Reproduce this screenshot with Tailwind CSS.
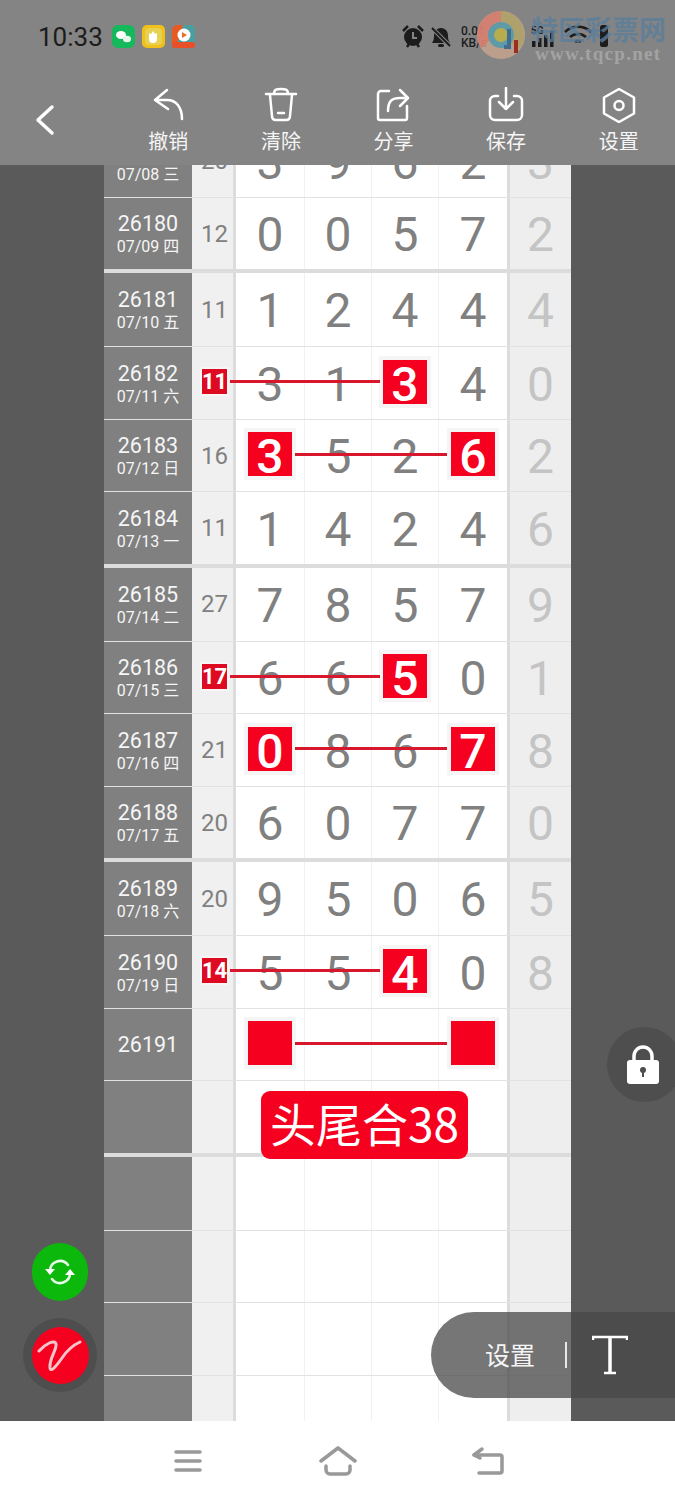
<!doctype html>
<html lang="zh">
  <head>
    <title>头尾合</title>
    <meta charset="utf-8" />
    <script src="https://cdn.jsdelivr.net/npm/@tailwindcss/browser@4"></script>
  </head>
  <body class="bg-white overflow-hidden font-['Roboto','Noto_Sans_CJK_SC',sans-serif]">
    <div class="relative w-[675px] h-[1500px] flex flex-col overflow-hidden">
      <!-- status bar + toolbar -->
      <div class="relative z-20 h-[165px] shrink-0 bg-[#848484]">
        <div class="relative h-[78px]">
          <div class="absolute left-[38px] top-[21px] text-[26px] leading-[32px] text-[#1c1c1c]">10:33</div>
          <div class="absolute left-[112px] top-[25px] flex gap-[7px]">
            <svg width="23" height="23" viewBox="0 0 23 23"><rect width="23" height="23" rx="6" fill="#16b85c"/><ellipse cx="9" cy="10" rx="5" ry="4" fill="#fff"/><ellipse cx="15" cy="14" rx="4" ry="3.2" fill="#e8f5ec"/></svg>
            <svg width="23" height="23" viewBox="0 0 23 23"><rect width="23" height="23" rx="5" fill="#f0c01c"/><rect x="3" y="3" width="17" height="17" rx="4" fill="#e8d050"/><path d="M7 8l2 1 2-3 2 3 2-1v6a4 4 0 0 1-8 0z" fill="#fff"/></svg>
            <svg width="23" height="23" viewBox="0 0 23 23"><rect width="23" height="23" rx="5" fill="#4aa0a0"/><path d="M0 5a5 5 0 0 1 5-5h6L4 23H5a5 5 0 0 1-5-5z" fill="#e85a24"/><rect y="17" width="23" height="6" rx="2" fill="#e8502a"/><circle cx="12" cy="10" r="6.5" fill="#fff"/><path d="M10 7l5 3-5 3z" fill="#e8702a"/></svg>
          </div>
          <svg class="absolute left-[401px] top-[24px]" width="52" height="25" viewBox="0 0 52 25" fill="#1c1c1c">
            <circle cx="12" cy="13" r="9"/><path d="M2 7l5-5M22 7l-5-5M6 23l2-3M18 23l-2-3" stroke="#1c1c1c" stroke-width="2.5"/><path d="M12 8v6h4" stroke="#848484" stroke-width="2" fill="none"/>
            <path d="M31 19c2-3 2-5 2-8a7 7 0 0 1 14 0c0 3 0 5 2 8z"/><rect x="37" y="20" width="6" height="3" rx="1.5"/><path d="M30 3l20 20" stroke="#848484" stroke-width="4"/><path d="M31 4l18 18" stroke="#1c1c1c" stroke-width="2"/>
          </svg>
          <div class="absolute left-[461px] top-[25px] text-[12px] leading-[12px] font-medium text-[#1c1c1c]">0.01<br />KB/s</div>
          <div class="absolute left-[531px] top-[25px] text-[10px] leading-[12px] font-bold text-[#1c1c1c]">5G</div>
          <svg class="absolute left-[503px] top-[22px]" width="106" height="28" viewBox="0 0 106 28" fill="#1c1c1c">
            <rect x="29" y="19" width="3.5" height="6"/><rect x="35" y="16" width="3.5" height="9"/><rect x="41" y="13" width="3.5" height="12"/><rect x="47" y="9" width="3.5" height="16"/>
            <path d="M62 10a19 19 0 0 1 26 0M67 15a12 12 0 0 1 16 0M72 20a5 5 0 0 1 6 0" fill="none" stroke="#1c1c1c" stroke-width="2.5"/>
            <rect x="97" y="3" width="8" height="22" rx="2.5"/>
          </svg>
          <svg class="absolute left-[476px] top-[9px]" width="50" height="52" viewBox="0 0 50 52">
            <circle cx="25" cy="26" r="24" fill="#c9a58e" fill-opacity=".8"/>
            <path d="M25 2a24 24 0 0 0-20 37l9-8A13 13 0 0 1 25 13z" fill="#d9756a" fill-opacity=".75"/>
            <path d="M25 13a13 13 0 0 1 10 21l9 5A24 24 0 0 0 25 2z" fill="#a9a35c" fill-opacity=".7"/>
            <circle cx="25" cy="26" r="13" fill="#5f9aa8"/>
            <circle cx="25" cy="26" r="7" fill="#b7ad4e"/>
            <path d="M33 20v18h-5" fill="none" stroke="#3d6f90" stroke-width="4"/>
            <rect x="38" y="31" width="4" height="13" fill="#9a2e22"/>
          </svg>
          <div class="absolute left-[531px] top-[12px] text-[27px] leading-[34px] font-bold text-[#5b7e9c]/80 font-['Noto_Sans_CJK_SC',sans-serif]">特区彩票网</div>
          <div class="absolute left-[535px] top-[43px] text-[19px] leading-[22px] tracking-[1.3px] font-bold text-[#a3a3a3] font-['Liberation_Serif',serif]">www.tqcp.net</div>
        </div>
        <div class="relative flex pl-[112px] pt-[9px]">
          <svg class="absolute left-[34px] top-[26px]" width="22" height="32" viewBox="0 0 22 32" fill="none" stroke="#fff" stroke-width="3.5" stroke-linecap="round" stroke-linejoin="round"><path d="M18 3L4 16l14 13"/></svg>
          <div class="w-[112.7px] flex flex-col items-center">
            <svg width="36" height="36" viewBox="0 0 36 36" fill="none" stroke="#fff" stroke-width="2.5" stroke-linecap="round" stroke-linejoin="round"><path d="M17 3L5 13l13 9M5 13h12c9 0 15 7 15 19"/></svg>
            <div class="mt-[5px] text-[20px] leading-[26px] text-[#f5f5f5] font-['Noto_Sans_CJK_SC',sans-serif]">撤销</div>
          </div>
          <div class="w-[112.7px] flex flex-col items-center">
            <svg width="36" height="36" viewBox="0 0 36 36" fill="none" stroke="#fff" stroke-width="2.5" stroke-linecap="round" stroke-linejoin="round"><path d="M3 7h30M11 7c0-5 3-5 7-5s7 0 7 5M7 8l2 21c0 3 2 4 4 4h10c2 0 4-1 4-4l2-21M15 26h6"/></svg>
            <div class="mt-[5px] text-[20px] leading-[26px] text-[#f5f5f5] font-['Noto_Sans_CJK_SC',sans-serif]">清除</div>
          </div>
          <div class="w-[112.7px] flex flex-col items-center">
            <svg width="36" height="36" viewBox="0 0 36 36" fill="none" stroke="#fff" stroke-width="2.5" stroke-linecap="round" stroke-linejoin="round"><path d="M14 4H6a3 3 0 0 0-3 3v24a2 2 0 0 0 2 2h25a2 2 0 0 0 2-2v-12"/><path d="M13 24c0-10 4-13 12-13h6M25 3l8 8-8 8"/></svg>
            <div class="mt-[5px] text-[20px] leading-[26px] text-[#f5f5f5] font-['Noto_Sans_CJK_SC',sans-serif]">分享</div>
          </div>
          <div class="w-[112.7px] flex flex-col items-center">
            <svg width="36" height="36" viewBox="0 0 36 36" fill="none" stroke="#fff" stroke-width="2.5" stroke-linecap="round" stroke-linejoin="round"><path d="M10 9H7a5 5 0 0 0-5 5v14a5 5 0 0 0 5 5h22a5 5 0 0 0 5-5V14a5 5 0 0 0-5-5h-3M18 1v21M11 15l7 7 7-7"/></svg>
            <div class="mt-[5px] text-[20px] leading-[26px] text-[#f5f5f5] font-['Noto_Sans_CJK_SC',sans-serif]">保存</div>
          </div>
          <div class="w-[112.7px] flex flex-col items-center">
            <svg width="36" height="36" viewBox="0 0 36 36" fill="none" stroke="#fff" stroke-width="2.5" stroke-linejoin="round"><path d="M18 2l15 8.5v16L18 35 3 26.500v-16z"/><circle cx="18" cy="18.500" r="4.500"/></svg>
            <div class="mt-[5px] text-[20px] leading-[26px] text-[#f5f5f5] font-['Noto_Sans_CJK_SC',sans-serif]">设置</div>
          </div>
        </div>
      </div>

      <!-- chart area -->
      <div class="relative h-[1256px] shrink-0 bg-[#5a5a5a] overflow-hidden">
        <div id="chart" class="ml-[104px] w-[467px] -mt-[39.600px] bg-white"></div>

        <!-- floating buttons -->
        <div class="absolute left-[261px] top-[926px] w-[207px] h-[68px] rounded-[9px] bg-[#f6001f] text-white text-[46px] leading-[62px] text-center font-['Noto_Sans_CJK_SC',sans-serif]">头尾合38</div>
        <div class="absolute left-[607px] top-[862px] w-[75px] h-[75px] rounded-full bg-[#4e4e4e] flex items-center justify-center pr-[4px]">
          <svg width="34" height="40" viewBox="0 0 34 40"><path d="M8 18V11a9 9 0 0 1 18 0v7" fill="none" stroke="#fff" stroke-width="3.500"/><rect x="1" y="15" width="32" height="24" rx="3" fill="#fff"/><circle cx="17" cy="25" r="3" fill="#4e4e4e"/><rect x="16" y="26" width="2" height="6" fill="#4e4e4e"/></svg>
        </div>
        <div class="absolute left-[32px] top-[1078px] w-[56px] h-[58px] rounded-full bg-[#0cb80c] flex items-center justify-center">
          <svg width="32" height="28" viewBox="0 0 32 28" fill="none" stroke="#e8fbe8" stroke-width="2.500" stroke-linecap="round"><path d="M6 13a10 10 0 0 1 18-6M26 15a10 10 0 0 1-18 6"/><path d="M1 11l5 6 5-6z" fill="#fff" stroke="none"/><path d="M21 17l5-6 5 6z" fill="#fff" stroke="none"/></svg>
        </div>
        <div class="absolute left-[23px] top-[1153px] w-[74px] h-[74px] rounded-full bg-[#4e4e4e] flex items-center justify-center">
          <div class="w-[57px] h-[57px] rounded-full bg-[#f6001f] flex items-center justify-center">
            <svg width="46" height="36" viewBox="0 0 46 36" fill="none" stroke="#f8c4cc" stroke-width="3" stroke-linecap="round" stroke-linejoin="round"><path d="M2 14C8 7 18 2 19 7c1 6-7 14-6 24 1 5 7-3 12-10 4-6 9-12 18-16"/></svg>
          </div>
        </div>
        <div class="absolute left-[431px] top-[1147px] w-[260px] h-[86px] rounded-l-[43px] bg-[#484848]/75 flex items-center">
          <div class="ml-[54px] text-[25px] text-[#f5f5f5] font-['Noto_Sans_CJK_SC',sans-serif]">设置</div>
          <div class="ml-[30px] w-[2px] h-[26px] bg-[#e8e8e8]"></div>
          <svg class="ml-[25px]" width="36" height="40" viewBox="0 0 36 40" fill="none" stroke="#fff"><path d="M1 5V2h34v3" stroke-width="2.500"/><path d="M18 2v36" stroke-width="3.500"/><path d="M12 38h12" stroke-width="2.500"/></svg>
        </div>
      </div>

      <!-- nav bar -->
      <div class="relative flex-1 bg-white">
        <svg class="absolute left-[172px] top-[27px]" width="32" height="26" viewBox="0 0 32 26" stroke="#999" stroke-width="3.500" stroke-linecap="round"><path d="M4 4h24M4 13h24M4 22h24"/></svg>
        <svg class="absolute left-[319px] top-[24px]" width="38" height="32" viewBox="0 0 38 32" fill="none" stroke="#999" stroke-width="3.500" stroke-linecap="round" stroke-linejoin="round"><path d="M2 16L19 3l17 13M7 21v4a4 4 0 0 0 4 4h16a4 4 0 0 0 4-4v-4"/></svg>
        <svg class="absolute left-[471px] top-[25px]" width="34" height="30" viewBox="0 0 34 30" fill="none" stroke="#999" stroke-width="3.500" stroke-linecap="round" stroke-linejoin="round"><path d="M3 9h26a2 2 0 0 1 2 2v14a2 2 0 0 1-2 2H8"/><path d="M11 3L3 9l6 3"/></svg>
      </div>
    </div>

    <script>
      // [期号, 日期, 和, 数字, 末列, 标红位置, 标红和, 行类型]
      const rows = [
        ["26179", "07/08 三", "20", "3962", "3"],
        ["26180", "07/09 四", "12", "0057", "2", null, false, "last"],
        ["26181", "07/10 五", "11", "1244", "4", null, false, "first"],
        ["26182", "07/11 六", "11", "3134", "0", [2], true],
        ["26183", "07/12 日", "16", "3526", "2", [0, 3]],
        ["26184", "07/13 一", "11", "1424", "6", null, false, "last"],
        ["26185", "07/14 二", "27", "7857", "9", null, false, "first"],
        ["26186", "07/15 三", "17", "6650", "1", [2], true],
        ["26187", "07/16 四", "21", "0867", "8", [0, 3]],
        ["26188", "07/17 五", "20", "6077", "0", null, false, "last"],
        ["26189", "07/18 六", "20", "9506", "5", null, false, "first"],
        ["26190", "07/19 日", "14", "5540", "8", [2], true],
        ["26191", "", "", "    ", "", [0, 3]],
        ["", "", "", "    ", "", null, false, "last"],
        ["", "", "", "    ", "", null, false, "first"],
        ["", "", "", "    ", ""],
        ["", "", "", "    ", ""],
        ["", "", "", "    ", ""],
      ];
      const colWidths = ["w-[69px]", "w-[67px]", "w-[67px]", "w-[68px]"];
      const rowClass = {
        first: "h-[74px] border-b border-[#e2e2e2]",
        last: "h-[75.300px] border-b-[4px] border-[#dcdcdc]",
      };

      document.querySelector("#chart").innerHTML = rows
        .map(([no, date, sum, digits, last, marks, sumMark, kind]) => {
          const cells = [...digits]
            .map((d, i) => {
              const marked = marks && marks.includes(i);
              return `<div class="${colWidths[i]} shrink-0 flex items-center justify-center border-r border-[#f1f1f1] last:border-r-0">
                ${marked
                  ? `<div class="relative z-10 w-[44px] h-[44px] -mt-[3px] bg-[#f6001f] outline-[4px] outline-[#f5f5f5] text-white text-[48px] font-medium leading-[50px] text-center">${d.trim()}</div>`
                  : `<span class="text-[48px] leading-[50px] mt-[3px] text-[#808080]">${d}</span>`}
              </div>`;
            })
            .join("");
          let line = "";
          if (marks && marks.length === 2) line = `<div class="absolute z-20 left-[191px] -mt-[3px] w-[152px] h-[3px] bg-[#d9172c]"></div>`;
          if (marks && marks.length === 1) line = `<div class="absolute z-20 left-[126px] -mt-[3px] w-[150px] h-[3px] bg-[#d9172c]"></div>`;
          return `<div class="relative flex items-center ${rowClass[kind] || "h-[72.600px] border-b border-[#e2e2e2]"}">
            <div class="w-[88px] h-full shrink-0 bg-[#808080] flex flex-col items-center justify-center text-[#f5f5f5]">
              <div class="text-[21.500px] leading-[27px]">${no}</div>
              ${date ? `<div class="text-[16px] leading-[20px]">${date}</div>` : ""}
            </div>
            <div class="w-[41px] h-full shrink-0 bg-[#f0f0f0] flex items-center justify-center pl-[4px]">
              ${sumMark
                ? `<div class="relative z-10 w-[25px] h-[25px] -mt-[3px] bg-[#de0a22] outline-[2px] outline-[#f6f6f6] text-white text-[22px] font-bold leading-[26px] text-center">${sum}</div>`
                : `<span class="text-[24px] text-[#808080]">${sum}</span>`}
            </div>
            <div class="w-[3px] h-full shrink-0 bg-[#dcdcdc]"></div>
            <div class="w-[271px] h-full shrink-0 flex">${cells}</div>
            <div class="w-[3px] h-full shrink-0 bg-[#dcdcdc]"></div>
            <div class="flex-1 h-full bg-[#eeeeee] flex items-center justify-center"><span class="text-[48px] leading-[50px] mt-[3px] text-[#c4c4c4]">${last}</span></div>
            ${line}
          </div>`;
        })
        .join("");
    </script>
  </body>
</html>
